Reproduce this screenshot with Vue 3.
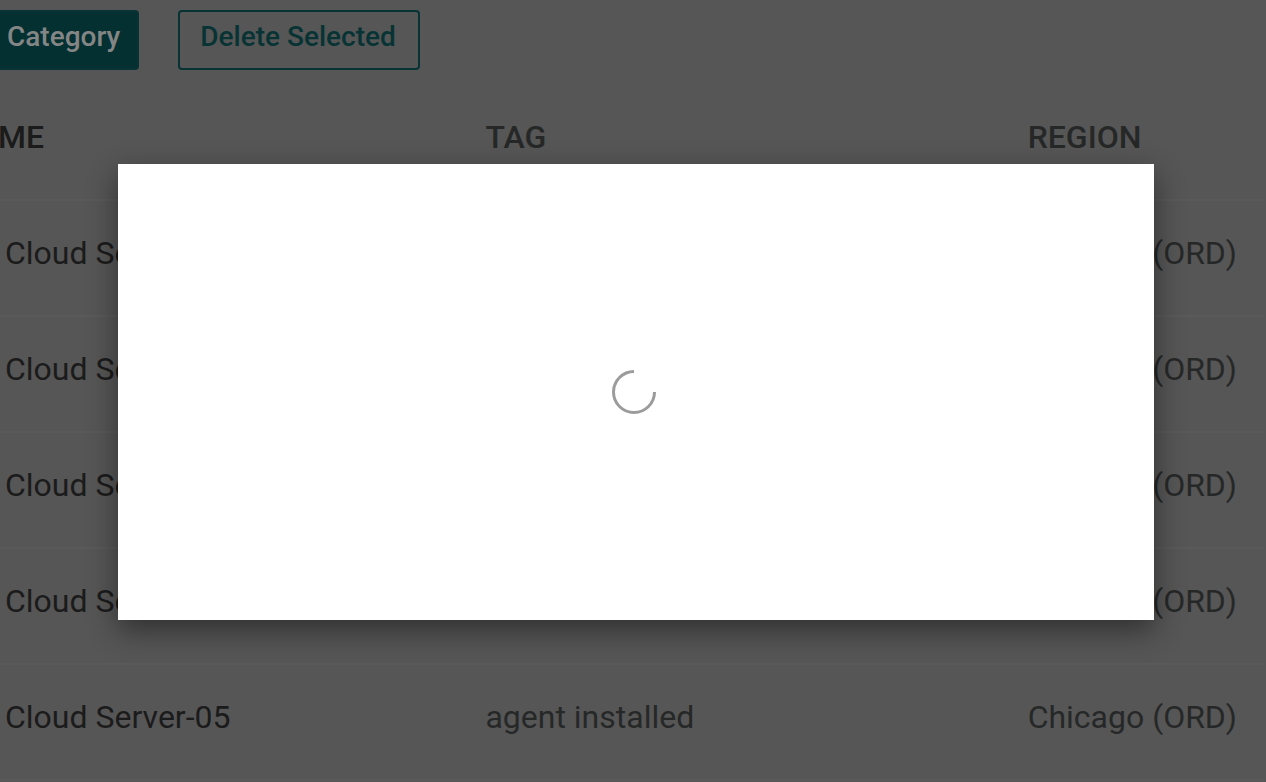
<script setup>
const servers = [1, 2, 3, 4, 5].map((n) => ({
  name: `Cloud Server-0${n}`,
  tag: 'agent installed',
  region: 'Chicago (ORD)',
}))
</script>

<template>
  <main class="page">
    <div class="toolbar">
      <button type="button" class="btn primary">Category</button>
      <button type="button" class="btn outline">Delete Selected</button>
    </div>
    <table class="servers">
      <thead>
        <tr>
          <th class="name" scope="col">ME</th>
          <th class="tag" scope="col">TAG</th>
          <th class="region" scope="col">REGION</th>
        </tr>
      </thead>
      <tbody>
        <tr v-for="server in servers" :key="server.name">
          <td class="name">{{ server.name }}</td>
          <td class="tag">{{ server.tag }}</td>
          <td class="region">{{ server.region }}</td>
        </tr>
      </tbody>
    </table>
  </main>
  <div class="overlay">
    <div class="dialog" role="dialog" aria-modal="true" aria-label="Loading">
      <svg class="spinner" viewBox="0 0 44 44" aria-hidden="true">
        <path d="M22 1.5A20.5 20.5 0 1 0 42.5 22" />
      </svg>
    </div>
  </div>
</template>

<style>
body {
  background: #565656;
  overflow: hidden;
}
</style>

<style scoped>
.page {
  font-family: Roboto, "Liberation Sans", sans-serif;
  padding: 10px 2px 0 0;
}
.toolbar {
  display: flex;
  gap: 39px;
}
.btn {
  box-sizing: border-box;
  height: 60px;
  padding: 0 20px 6px;
  font: 500 28px/32px Roboto, "Liberation Sans", sans-serif;
  border: 2px solid #083334;
  border-radius: 4px;
}
.primary {
  padding: 0 17px 6px 7px;
  border-left: 0;
  border-radius: 0 4px 4px 0;
  background: #053031;
  color: #848686;
}
.outline {
  padding-right: 22px;
  background: transparent;
  color: #083334;
}
.servers {
  width: 100%;
  border-collapse: separate;
  border-spacing: 0;
  table-layout: fixed;
  font-size: 32px;
  line-height: 38px;
  color: #262828;
}
th,
td {
  box-sizing: border-box;
  padding: 0 0 10px;
  border-bottom: 2px solid #5a5a5a;
  text-align: left;
  font-weight: 400;
  white-space: nowrap;
}
th {
  height: 131px;
  padding-bottom: 0;
  font-weight: 500;
}
td {
  height: 116px;
}
.name {
  width: 38.4%;
  color: #1b1b1b;
}
th.name {
  text-indent: -2px;
}
td.name {
  padding-left: 5px;
}
.tag {
  width: 42.9%;
}
thead th {
  padding-top: 4px;
}
.overlay {
  position: fixed;
  inset: 0;
  display: flex;
  align-items: flex-start;
  padding: 164px 112px 0 118px;
}
.dialog {
  flex: 1;
  display: grid;
  place-items: center;
  min-height: 456px;
  padding-right: 4px;
  background: #fff;
  box-shadow: 0 10px 28px rgba(0, 0, 0, 0.45);
}
.spinner {
  width: 44px;
  height: 44px;
  fill: none;
  stroke: #9b9b9b;
  stroke-width: 3;
}
</style>
